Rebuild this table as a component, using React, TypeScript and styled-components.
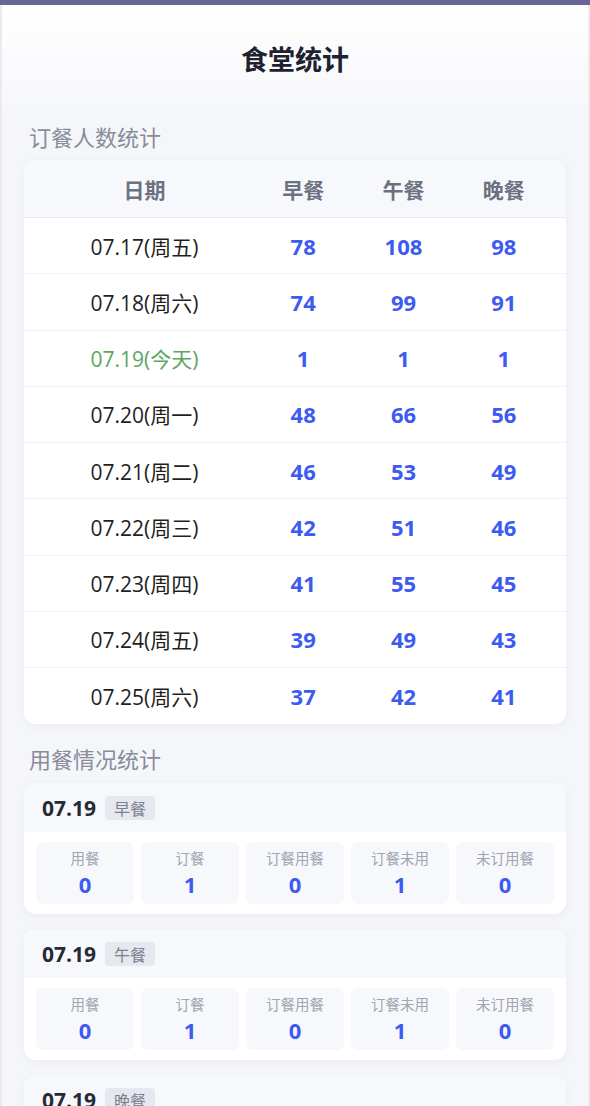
import React from "react";
import styled, { createGlobalStyle } from "styled-components";

const Global = createGlobalStyle`
  html, body { margin: 0; padding: 0; }
  body {
    background: #ebebee;
    font-family: "Open Sans", "Noto Sans CJK SC", sans-serif;
  }
  * { box-sizing: border-box; }
`;

const TopBar = styled.div`
  height: 5px;
  background: #676696;
`;

const Page = styled.div`
  margin: 0 2px;
  min-height: 1101px;
  background: linear-gradient(180deg, #ffffff 0px, #f5f6fa 120px, #f5f6fa 100%);
  padding: 38px 22px 24px;
`;

const Title = styled.h1`
  margin: 0;
  text-align: center;
  font-size: 27px;
  line-height: 34px;
  font-weight: 700;
  color: #1d2130;
`;

const SectionTitle = styled.div<{ $top: number; $bottom: number }>`
  margin: ${(p) => p.$top}px 0 ${(p) => p.$bottom}px 5px;
  font-size: 22px;
  line-height: 28px;
  color: #878d9b;
`;

const Card = styled.div`
  background: #ffffff;
  border-radius: 12px;
  overflow: hidden;
  box-shadow: 0 2px 8px rgba(30, 40, 70, 0.05);
`;

const TableRow = styled.div<{ $head?: boolean }>`
  display: grid;
  grid-template-columns: 217px 1fr 1fr 1fr;
  align-items: center;
  padding: 0 12px;
  height: ${(p) => (p.$head ? 58 : 56.25)}px;
  background: ${(p) => (p.$head ? "#f7f8fb" : "#ffffff")};
  border-bottom: 1px solid ${(p) => (p.$head ? "#e6e9f0" : "#f1f2f6")};
  &:last-child { border-bottom: none; }
`;

const HeadCell = styled.div`
  text-align: center;
  font-size: 21px;
  font-weight: 700;
  color: #6b7180;
`;

const DateCell = styled.div<{ $today?: boolean }>`
  text-align: center;
  font-size: 21px;
  color: ${(p) => (p.$today ? "#5aa75e" : "#1f1f1f")};
`;

const NumCell = styled.div`
  text-align: center;
  font-size: 22px;
  font-weight: 700;
  color: #3d5af1;
`;

const MealCard = styled(Card)`
  margin-bottom: 15px;
`;

const MealHead = styled.div`
  display: flex;
  align-items: center;
  gap: 9px;
  height: 49px;
  padding: 0 18px;
  background: #f7f8fb;
`;

const MealDate = styled.div`
  font-size: 21px;
  font-weight: 700;
  color: #262a35;
`;

const Tag = styled.span`
  display: inline-flex;
  align-items: center;
  height: 24px;
  padding: 0 9px;
  border-radius: 4px;
  background: #e5e8ee;
  color: #7a808d;
  font-size: 16px;
`;

const StatGrid = styled.div`
  display: grid;
  grid-template-columns: repeat(5, 1fr);
  gap: 7px;
  padding: 10px 12px;
`;

const StatBox = styled.div`
  height: 62px;
  border-radius: 7px;
  background: #f7f8fb;
  display: flex;
  flex-direction: column;
  align-items: center;
  justify-content: center;
`;

const StatLabel = styled.div`
  font-size: 14.5px;
  line-height: 20px;
  color: #a0a5b1;
`;

const StatValue = styled.div`
  font-size: 22px;
  line-height: 28px;
  margin-top: 1px;
  font-weight: 700;
  color: #3d5af1;
`;

const rows: { d: string; v: number[]; today?: boolean }[] = [
  { d: "07.17(周五)", v: [78, 108, 98] },
  { d: "07.18(周六)", v: [74, 99, 91] },
  { d: "07.19(今天)", v: [1, 1, 1], today: true },
  { d: "07.20(周一)", v: [48, 66, 56] },
  { d: "07.21(周二)", v: [46, 53, 49] },
  { d: "07.22(周三)", v: [42, 51, 46] },
  { d: "07.23(周四)", v: [41, 55, 45] },
  { d: "07.24(周五)", v: [39, 49, 43] },
  { d: "07.25(周六)", v: [37, 42, 41] },
];

const labels = ["用餐", "订餐", "订餐用餐", "订餐未用", "未订用餐"];
const meals = [
  { name: "早餐", v: [0, 1, 0, 1, 0] },
  { name: "午餐", v: [0, 1, 0, 1, 0] },
  { name: "晚餐", v: [0, 1, 0, 1, 0] },
];

export default function App() {
  return (
    <>
      <Global />
      <TopBar />
      <Page>
        <Title>食堂统计</Title>
        <SectionTitle $top={46} $bottom={9}>订餐人数统计</SectionTitle>
        <Card>
          <TableRow $head>
            <HeadCell>日期</HeadCell>
            <HeadCell>早餐</HeadCell>
            <HeadCell>午餐</HeadCell>
            <HeadCell>晚餐</HeadCell>
          </TableRow>
          {rows.map((r) => (
            <TableRow key={r.d}>
              <DateCell $today={r.today}>{r.d}</DateCell>
              {r.v.map((n, i) => (
                <NumCell key={i}>{n}</NumCell>
              ))}
            </TableRow>
          ))}
        </Card>
        <SectionTitle $top={21} $bottom={10}>用餐情况统计</SectionTitle>
        {meals.map((m) => (
          <MealCard key={m.name}>
            <MealHead>
              <MealDate>07.19</MealDate>
              <Tag>{m.name}</Tag>
            </MealHead>
            <StatGrid>
              {labels.map((l, i) => (
                <StatBox key={l}>
                  <StatLabel>{l}</StatLabel>
                  <StatValue>{m.v[i]}</StatValue>
                </StatBox>
              ))}
            </StatGrid>
          </MealCard>
        ))}
      </Page>
    </>
  );
}
